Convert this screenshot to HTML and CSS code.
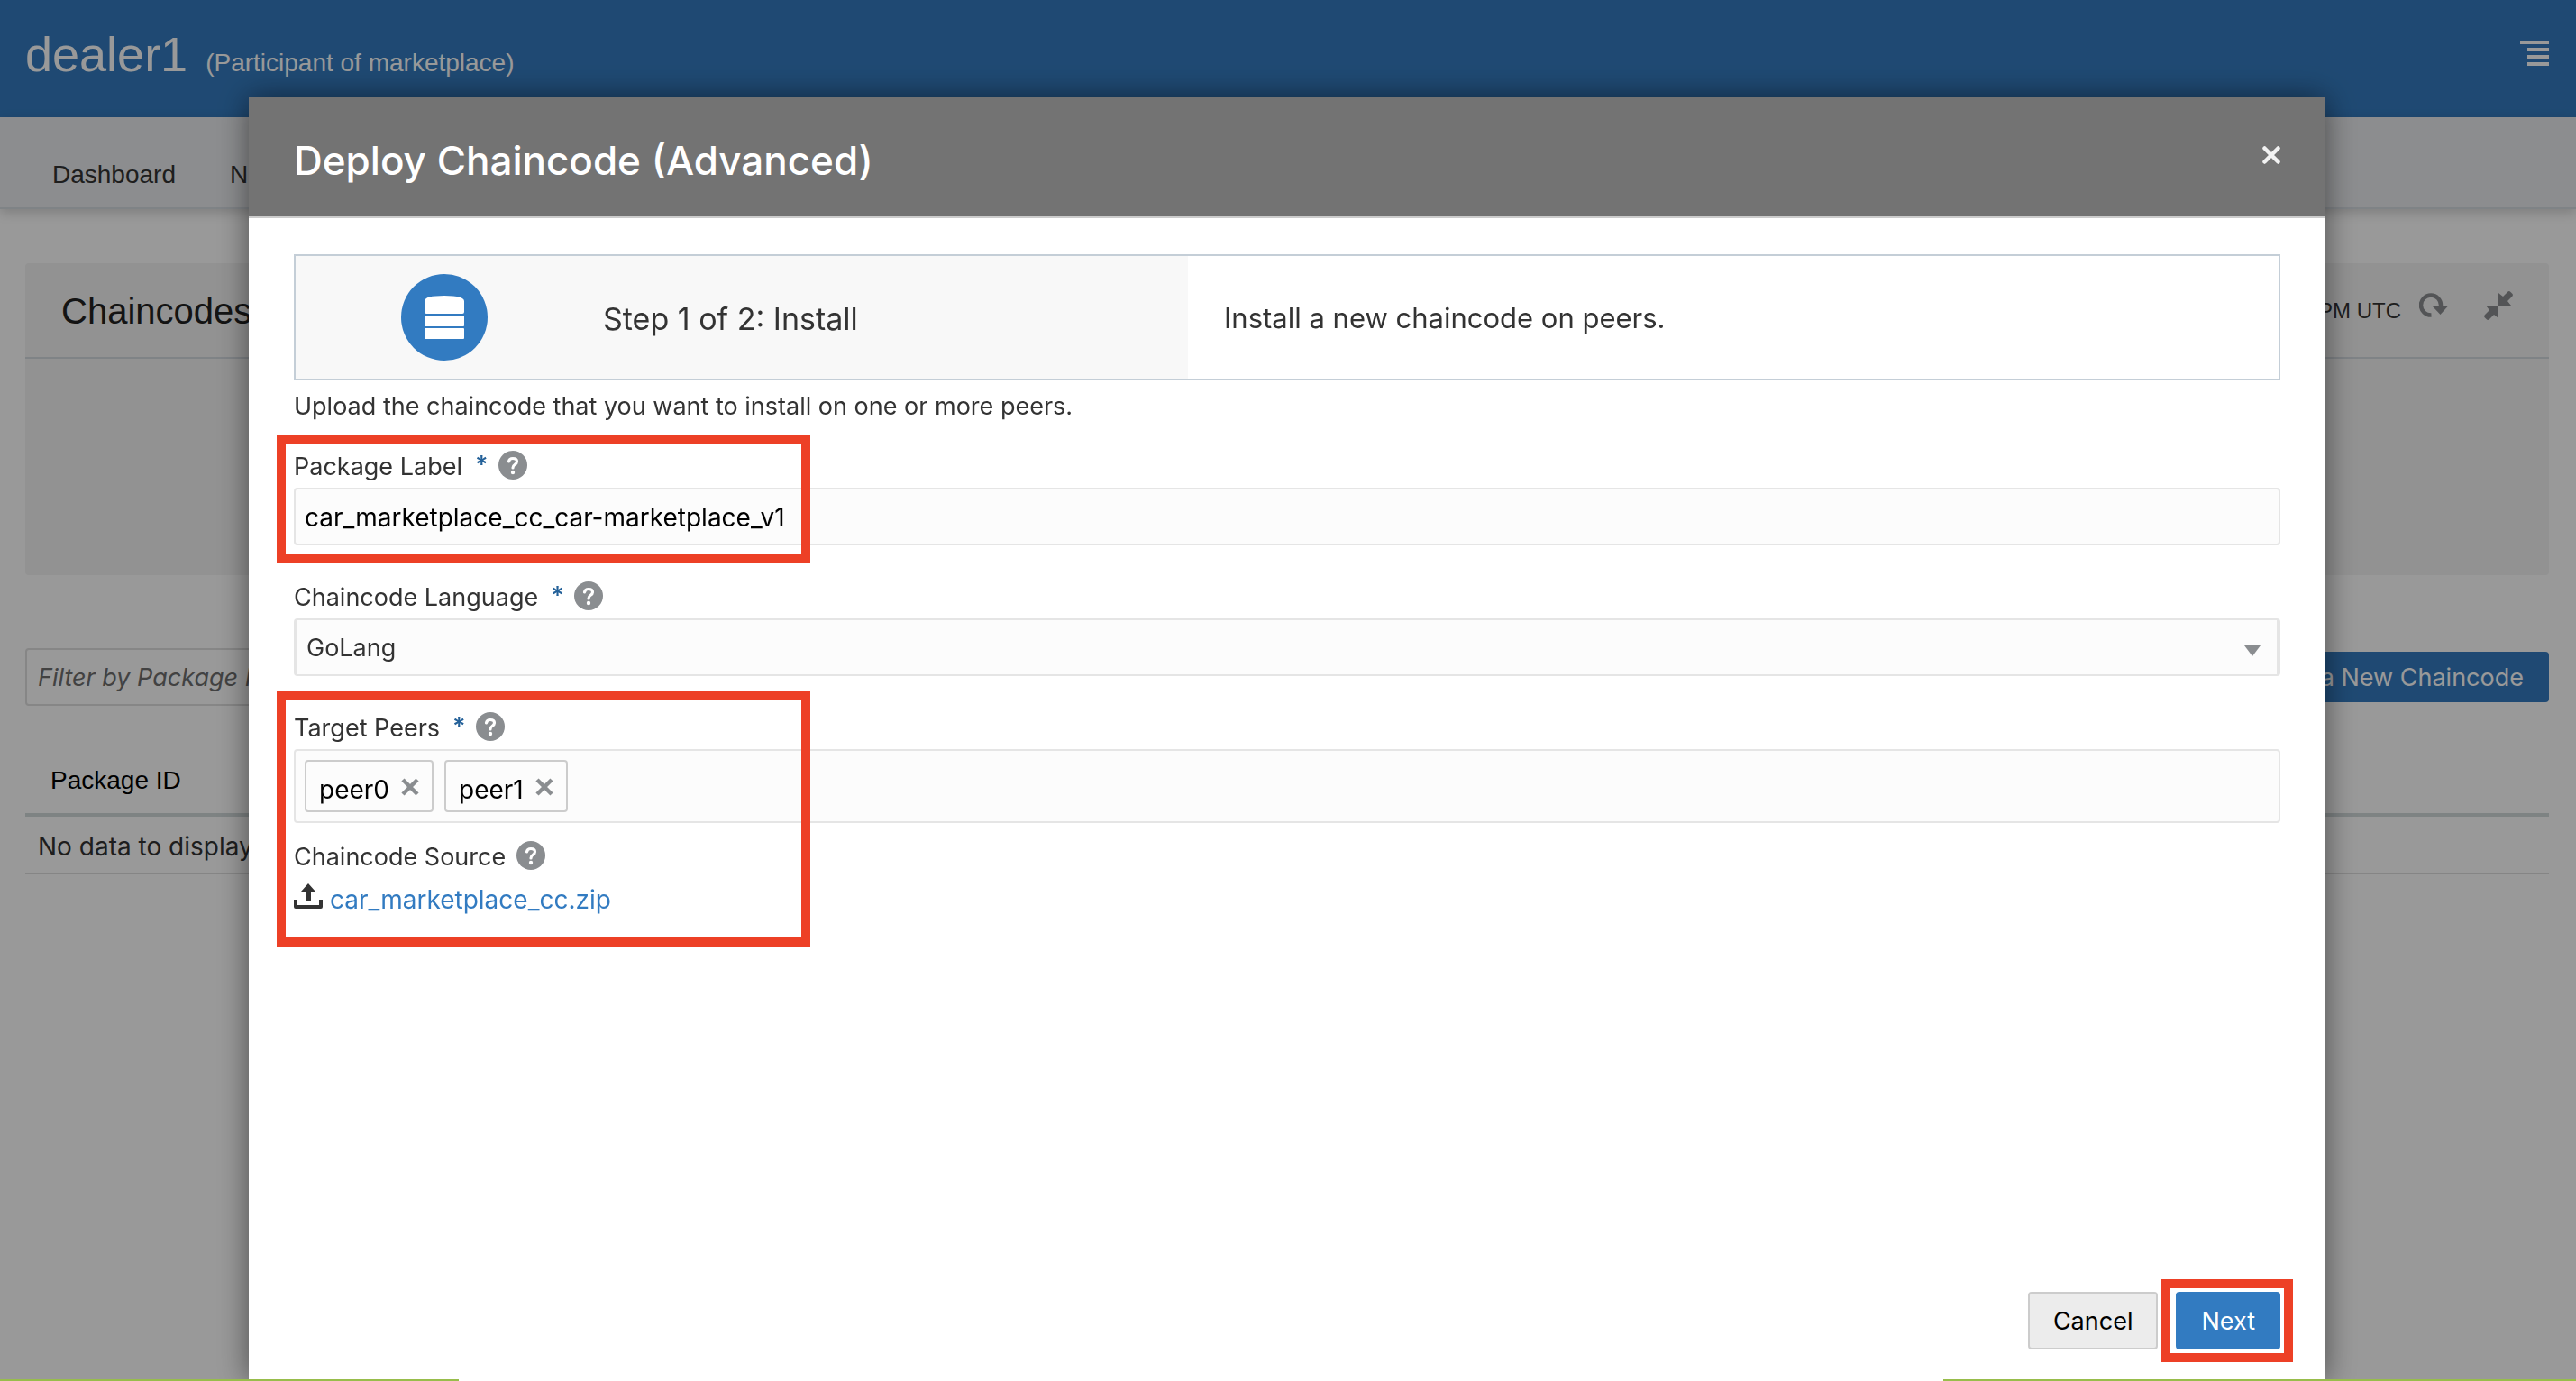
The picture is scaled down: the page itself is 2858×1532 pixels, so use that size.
FILE: index.html
```html
<!DOCTYPE html>
<html lang="en">
<head>
<meta charset="utf-8">
<title>Deploy Chaincode</title>
<link rel="stylesheet" href="styles.css">
</head>
<body>
<div class="page">
  <header class="topbar">
    <h1 class="brand">dealer1</h1>
    <span class="role">(Participant of marketplace)</span>
    <button class="icon-button menu" type="button" aria-label="Menu">
      <svg width="32" height="28" viewBox="0 0 32 28" fill="#fff"><path d="M0 0h32v4H0zM8 8h24v4H8zM8 16h24v4H8zM8 24h24v4H8z"/></svg>
    </button>
  </header>
  <nav class="nav">
    <a href="#">Dashboard</a>
    <a href="#">N</a>
  </nav>
  <main class="content">
    <section class="panel">
      <div class="panel-head">
        <h2>Chaincodes</h2>
        <span class="stamp">PM UTC</span>
        <button class="icon-button" type="button" aria-label="Refresh">
          <svg width="32" height="32" viewBox="0 0 32 32"><path d="M13.5 26.5A11 11 0 1 1 24 16" fill="none" stroke="#8a8d90" stroke-width="4.500"/><path d="M14.500 16.500H32L23.500 26z" fill="#8a8d90"/></svg>
        </button>
        <button class="icon-button" type="button" aria-label="Collapse">
          <svg width="32" height="32" viewBox="0 0 32 32" fill="#8a8d90"><path d="M16 16V2l5 4 5.500-5.500q1.500-1 3 .500l2 2q1 1.500-.5 3L26 11l4 5zM16 16v14l-5-4-5.500 5.500q-1.500 1-3-.5l-2-2q-1-1.500.5-3L6 21l-4-5z"/></svg>
        </button>
      </div>
    </section>
    <div class="toolbar">
      <input class="filter" type="text" placeholder="Filter by Package ID" aria-label="Filter by Package ID">
      <button class="deploy" type="button">Deploy a New Chaincode</button>
    </div>
    <table class="grid">
      <thead><tr><th>Package ID</th></tr></thead>
      <tbody><tr><td>No data to display</td></tr></tbody>
    </table>
  </main>
</div>

<div class="overlay">
  <div class="dialog" role="dialog" aria-labelledby="dialog-title">
    <div class="dialog-head">
      <h2 id="dialog-title">Deploy Chaincode (Advanced)</h2>
      <button class="icon-button" type="button" aria-label="Close">
        <svg width="20" height="20" viewBox="0 0 20 20"><path d="M2.500 2.500l15 15M17.500 2.500l-15 15" stroke="#f2f2f2" stroke-width="4.500" stroke-linecap="round"/></svg>
      </button>
    </div>
    <form class="dialog-body">
      <div class="step">
        <div class="step-name">
          <svg width="96" height="96" viewBox="0 0 96 96"><circle cx="48" cy="48" r="48" fill="#327bc1"/><g fill="#fff"><path d="M26 30q0-6 22-6t22 6v12q0 2-2 2H28q-2 0-2-2z"/><rect x="26" y="46" width="44" height="12" rx="1"/><rect x="26" y="60" width="44" height="12" rx="1"/></g></svg>
          <span>Step 1 of 2: Install</span>
        </div>
        <div class="step-text">Install a new chaincode on peers.</div>
      </div>
      <p class="intro">Upload the chaincode that you want to install on one or more peers.</p>

      <div class="field marked-label">
        <div class="label-row">
          <label for="pkg">Package Label</label><span class="req">*</span>
          <svg class="help" viewBox="0 0 32 32"><use href="#help"/></svg>
        </div>
        <input class="box" id="pkg" type="text" value="car_marketplace_cc_car-marketplace_v1">
      </div>

      <div class="field">
        <div class="label-row">
          <label for="lang">Chaincode Language</label><span class="req">*</span>
          <svg class="help" viewBox="0 0 32 32"><use href="#help"/></svg>
        </div>
        <div class="select-wrap">
          <select class="box" id="lang"><option>GoLang</option></select>
          <svg class="caret" width="18" height="12" viewBox="0 0 18 12"><path d="M0 0h18L9 12z" fill="#8a8d90"/></svg>
        </div>
      </div>

      <div class="marked-source">
        <div class="field">
          <div class="label-row">
            <span class="label">Target Peers</span><span class="req">*</span>
            <svg class="help" viewBox="0 0 32 32"><use href="#help"/></svg>
          </div>
          <div class="box chips">
            <span class="chip"><span>peer0</span><button class="icon-button" type="button" aria-label="Remove peer0"><svg width="20" height="20" viewBox="0 0 20 20"><use href="#cross"/></svg></button></span>
            <span class="chip"><span>peer1</span><button class="icon-button" type="button" aria-label="Remove peer1"><svg width="20" height="20" viewBox="0 0 20 20"><use href="#cross"/></svg></button></span>
          </div>
        </div>
        <div class="label-row">
          <span class="label">Chaincode Source</span>
          <svg class="help" viewBox="0 0 32 32"><use href="#help"/></svg>
        </div>
        <a class="upload" href="#">
          <svg width="32" height="28" viewBox="0 0 32 28" fill="#333"><path d="M16 0l8 9h-5v10h-6V9H8zM0 18h4v6h24v-6h4v8q0 2-2 2H2q-2 0-2-2z"/></svg>
          <span>car_marketplace_cc.zip</span>
        </a>
      </div>

      <div class="actions">
        <button class="cancel" type="button">Cancel</button>
        <div class="marked-next"><button class="next" type="submit">Next</button></div>
      </div>
    </form>
  </div>
</div>
<div class="baseline"><span></span><span></span></div>

<svg class="defs" width="0" height="0">
  <symbol id="help" viewBox="0 0 32 32"><circle cx="16" cy="16" r="16" fill="#8a8d90"/><path d="M11.500 12q.5-3.500 4.500-3.500 4.500 0 4.500 3.500 0 2-2.500 3.500-2 1.200-2 3.500" fill="none" stroke="#fff" stroke-width="3.200" stroke-linecap="round"/><circle cx="16" cy="24" r="2.200" fill="#fff"/></symbol>
  <symbol id="cross" viewBox="0 0 20 20"><path d="M2 2l16 16M18 2L2 18" stroke="#8a8d90" stroke-width="4.500"/></symbol>
</svg>
</body>
</html>
```
FILE: styles.css
```css
*, *::before, *::after { box-sizing: border-box; }
html, body { height: 100%; }
body { margin: 0; overflow: hidden; background: #fff; color: #333; font: 27px/32px Inter, sans-serif; }
h1, h2, p { margin: 0; font-weight: 400; }
button, input, select { font: inherit; color: inherit; margin: 0; }
a { color: inherit; text-decoration: none; }
svg { display: block; flex: none; }
.defs { position: absolute; }
.icon-button { padding: 0; border: 0; background: none; }

.topbar, .nav, .stamp, .panel-head, .grid th { font-family: "Liberation Sans", sans-serif; }
.topbar { display: flex; align-items: baseline; height: 130px; padding: 28px 30px 0 28px; background: #347bc0; color: #fff; }
.brand { font-size: 54px; line-height: 64px; }
.role { margin-left: 20px; font-size: 28px; }
.menu { align-self: flex-start; margin: 17px 0 0 auto; }
.nav { display: flex; gap: 60px; padding: 48px 58px 20px; height: 102px; background: #e9ebee; border-bottom: 2px solid #d4dae0; box-shadow: 0 4px 12px rgba(0,0,0,.18); font-size: 28px; color: #333; }
.content { padding: 60px 30px 0 28px; }

.panel { min-height: 346px; background: #f4f4f4; border-radius: 4px; }
.panel-head { display: flex; align-items: center; height: 106px; padding: 0 40px; border-bottom: 2px solid #d4dae0; }
.panel-head h2 { padding-top: 2px; font-size: 40px; line-height: 48px; color: #222; }
.stamp { margin: 0 20px 0 auto; font-size: 24px; line-height: 28px; padding-top: 2px; }
.panel-head .icon-button { margin-bottom: 10px; }
.panel-head .icon-button + .icon-button { margin-left: 40px; }

.toolbar { display: flex; align-items: flex-start; justify-content: space-between; margin-top: 81px; }
.filter { width: 800px; height: 64px; padding: 0 12px; border: 2px solid #dfdfdf; border-radius: 4px; background: #fff; }
.filter::placeholder { color: #6e6e6e; font-style: italic; opacity: 1; }
.deploy { height: 56px; margin-top: 4px; padding: 2px 28px 0; border: 0; border-radius: 4px; background: #347bc0; color: #fff; }

.grid { width: 100%; margin-top: 50px; border-collapse: collapse; text-align: left; }
.grid th { height: 71px; padding: 0 28px 4px; border-bottom: 4px solid #d2dadb; font-size: 28px; font-weight: 400; color: #000; }
.grid td { height: 65px; padding: 4px 14px 0; border-bottom: 2px solid #dedede; font-size: 28px; }

.overlay { position: fixed; inset: 0; padding: 108px 278px 0 276px; background: rgba(0,0,0,.4); display: flex; }
.dialog { flex: 1; display: flex; flex-direction: column; background: #fff; box-shadow: 0 0 32px rgba(0,0,0,.5); }
.dialog-head { display: flex; align-items: center; justify-content: space-between; height: 134px; padding: 0 50px; background: #737373; border-bottom: 2px solid #ccc; color: #fff; }
.dialog-head h2 { padding-top: 8px; font-size: 44px; line-height: 56px; font-weight: 500; }
.dialog-head .icon-button { margin-bottom: 4px; }
.dialog-body { flex: 1; display: flex; flex-direction: column; padding: 40px 50px 35px; }

.step { display: grid; grid-template-columns: 45% 55%; height: 140px; border: 2px solid #c4ced7; }
.step-name { display: flex; align-items: center; gap: 128px; padding-left: 117px; background: #f8f8f8; font-size: 34px; line-height: 40px; }
.step-name span { padding-top: 4px; }
.step-text { display: flex; align-items: center; padding: 2px 0 0 40px; font-size: 31px; }
.intro { padding: 13px 0 33px; }

.field { margin-bottom: 40px; }
.label-row { display: flex; align-items: center; height: 32px; margin-bottom: 9px; }
.label-row label, .label { padding-top: 4px; }
.req { align-self: flex-start; width: 14px; margin-left: 14px; color: #246199; font-weight: 600; }
.help { width: 32px; height: 32px; margin-left: 12px; }
.box { display: block; width: 100%; height: 64px; padding: 2px 10px 0; border: 2px solid #e5e5e5; border-radius: 4px; background: #fcfcfc; color: #000; font-size: 28px; }
.select-wrap { position: relative; }
select.box { appearance: none; border-width: 2px 4px; color: #333; font-size: 27px; }
.caret { position: absolute; right: 22px; top: 30px; pointer-events: none; }
.chips { display: flex; gap: 12px; height: 82px; padding: 10px; }
.chip { display: flex; align-items: center; gap: 13px; height: 58px; padding: 0 14px; border: 2px solid #ccc; border-radius: 4px; }
.chip span, .upload span { padding-top: 7px; }
.chip .icon-button { padding-top: 2px; }

.marked-label, .marked-source, .marked-next { position: relative; }
.marked-label::after, .marked-source::after, .marked-next::after { content: ""; position: absolute; border: 10px solid #ed4026; pointer-events: none; }
.marked-label::after { inset: -17px auto -20px -19px; width: 592px; }
.marked-source::after { inset: -24px auto -40px -19px; width: 592px; }
.marked-next::after { inset: -14px -14px -14px -16px; }
.marked-source .field { margin-bottom: 20px; }
.upload { display: flex; align-items: center; gap: 8px; width: fit-content; height: 36px; padding-top: 4px; color: #327bc1; font-size: 28px; }
.upload span { line-height: 28px; }

.actions { display: flex; justify-content: flex-end; gap: 20px; margin-top: auto; }
.cancel, .next { height: 64px; padding: 2px 26px 0; border: 2px solid #ccc; border-radius: 4px; background: #ececec; color: #000; }
.next { border-color: #327bc1; background: #327bc1; color: #fff; display: block; }

.baseline { position: fixed; left: 0; right: 0; bottom: 0; display: flex; justify-content: space-between; height: 2px; }
.baseline span { width: 509px; background: #98bd4b; }
.baseline span + span { width: 702px; }
```
